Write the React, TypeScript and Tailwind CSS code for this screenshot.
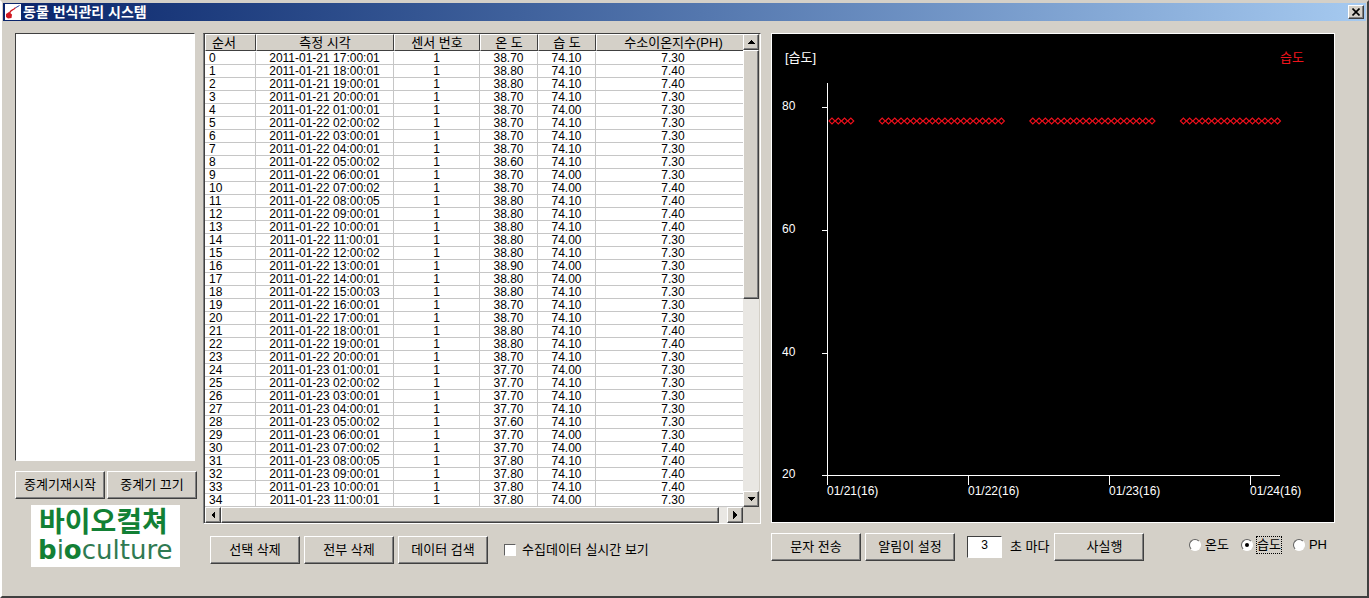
import type { ButtonHTMLAttributes, ReactNode } from "react";

const FONT = "font-['Liberation_Sans','Noto_Sans_CJK_KR',sans-serif]";
const RAISED =
  "bg-[#d4d0c8] border border-t-white border-l-white border-r-[#404040] border-b-[#404040] shadow-[inset_-1px_-1px_0_#808080]";
const TRACK = "bg-[#e9e7e3]";

type Reading = [time: string, temp: string, humidity: string, ph: string];

const firstDay: Reading[] = [
  ["17:00:01", ".70", "74.10", "7.30"],
  ["18:00:01", ".80", "74.10", "7.40"],
  ["19:00:01", ".80", "74.10", "7.40"],
  ["20:00:01", ".70", "74.10", "7.30"],
];

const fullDay: Reading[] = [
  ["01:00:01", ".70", "74.00", "7.30"],
  ["02:00:02", ".70", "74.10", "7.30"],
  ["03:00:01", ".70", "74.10", "7.30"],
  ["04:00:01", ".70", "74.10", "7.30"],
  ["05:00:02", ".60", "74.10", "7.30"],
  ["06:00:01", ".70", "74.00", "7.30"],
  ["07:00:02", ".70", "74.00", "7.40"],
  ["08:00:05", ".80", "74.10", "7.40"],
  ["09:00:01", ".80", "74.10", "7.40"],
  ["10:00:01", ".80", "74.10", "7.40"],
  ["11:00:01", ".80", "74.00", "7.30"],
  ["12:00:02", ".80", "74.10", "7.30"],
  ["13:00:01", ".90", "74.00", "7.30"],
  ["14:00:01", ".80", "74.00", "7.30"],
  ["15:00:03", ".80", "74.10", "7.30"],
  ["16:00:01", ".70", "74.10", "7.30"],
  ["17:00:01", ".70", "74.10", "7.30"],
  ["18:00:01", ".80", "74.10", "7.40"],
  ["19:00:01", ".80", "74.10", "7.40"],
  ["20:00:01", ".70", "74.10", "7.30"],
];

const onDay = (date: string, degrees: string, readings: Reading[]) =>
  readings.map(([time, temp, humidity, ph]) => [`${date} ${time}`, "1", degrees + temp, humidity, ph]);

const rows = [
  ...onDay("2011-01-21", "38", firstDay),
  ...onDay("2011-01-22", "38", fullDay),
  ...onDay("2011-01-23", "37", fullDay.slice(0, 11)),
];

const headers = ["순서", "측정 시각", "센서 번호", "온 도", "습 도", "수소이온지수(PH)"];

function PushButton({ children, className = "", ...rest }: { children: ReactNode } & ButtonHTMLAttributes<HTMLButtonElement>) {
  return (
    <button type="button" className={`h-7 w-[90px] whitespace-nowrap text-[13px] leading-4 ${RAISED} ${className}`} {...rest}>
      {children}
    </button>
  );
}

function ArrowButton({ label, points }: { label: string; points: string }) {
  return (
    <button type="button" aria-label={label} className={`flex size-4 shrink-0 items-center justify-center ${RAISED}`}>
      <svg viewBox="0 0 8 8" className="size-2" shapeRendering="crispEdges">
        <polygon points={points} />
      </svg>
    </button>
  );
}

function TitleBar() {
  return (
    <header className="flex h-[18px] items-center bg-linear-to-r from-[#0a246a] to-[#a6caf0] pr-0.5 pl-0.5">
      <svg viewBox="0 0 16 16" className="size-4 shrink-0 bg-white">
        <path d="M4.5 9.5 C5.5 5 8.5 7 10.5 3.5" fill="none" stroke="#d01820" strokeWidth="1.3" />
        <path d="M10.5 3.8 L14.5 1.5" stroke="#2b3c9c" strokeWidth="1" />
        <path d="M1 10 L4 8 L7 10.5 L6.5 14 L3 14.5 L1 13 Z" fill="#d01820" />
      </svg>
      <h1 className="ml-0.5 flex-1 whitespace-nowrap text-sm leading-[18px] font-bold text-white">동물 번식관리 시스템</h1>
      <button type="button" aria-label="닫기" className={`flex h-3.5 w-4 items-center justify-center ${RAISED}`}>
        <svg viewBox="0 0 8 8" className="size-2">
          <path d="M0.5 0.5 L7.5 7.5 M7.5 0.5 L0.5 7.5" stroke="#000" strokeWidth="1.6" />
        </svg>
      </button>
    </header>
  );
}

function Logo() {
  return (
    <svg viewBox="0 0 149 62" className="mt-1.5 ml-4 h-[62px] w-[149px] bg-white" role="img" aria-label="바이오컬쳐 bioculture">
      <text x="8" y="27" fontSize="28" fontWeight="700" fill="#128035" fontFamily="'Noto Sans CJK KR', sans-serif">
        바이오컬쳐
      </text>
      <text x="7" y="54" fontSize="26" fill="#2f7a52" fontFamily="'DejaVu Sans', sans-serif">
        <tspan fontWeight="700" fill="#128035">b</tspan>i<tspan fontWeight="700" fill="#128035">o</tspan>culture
      </text>
    </svg>
  );
}

function ReadingsTable() {
  return (
    <div className="border border-t-[#404040] border-l-[#808080] border-r-white border-b-white bg-[#d4d0c8] pr-px">
      <div className="flex border-l border-[#404040]">
        <div className="min-w-0 flex-1 overflow-hidden bg-white">
          <table className="w-[546px] table-fixed border-separate border-spacing-0 text-xs">
            <colgroup>
              <col className="w-[51px]" />
              <col className="w-[138px]" />
              <col className="w-[86px]" />
              <col className="w-[58px]" />
              <col className="w-[58px]" />
              <col />
            </colgroup>
            <thead>
              <tr>
                {headers.map((h, i) => (
                  <th key={h} scope="col" className="h-[18px] p-0 pb-px font-normal">
                    <div
                      className={`h-[17px] border border-t-white border-l-white border-r-[#404040] border-b-[#404040] bg-[#d4d0c8] text-[13px] leading-[15px] whitespace-nowrap ${i === 0 ? "pl-1.5 text-left" : "text-center"}`}
                    >
                      {h}
                    </div>
                  </th>
                ))}
              </tr>
            </thead>
            <tbody>
              {rows.map((cells, n) => (
                <tr key={cells[0]}>
                  <td className="h-[13px] border-r border-b border-[#c6c6c6] p-0 pl-1 leading-3">{n}</td>
                  {cells.map((c, i) => (
                    <td key={i} className="h-[13px] border-r border-b border-[#c6c6c6] p-0 text-center leading-3 whitespace-nowrap">
                      {c}
                    </td>
                  ))}
                </tr>
              ))}
            </tbody>
          </table>
        </div>
        <div className={`flex w-4 shrink-0 flex-col ${TRACK}`}>
          <ArrowButton label="위로" points="4,2 8,6 0,6" />
          <div className={`h-[249px] ${RAISED}`} />
          <div className="flex-1" />
          <ArrowButton label="아래로" points="0,2 8,2 4,6" />
        </div>
      </div>
      <div className="flex h-4 border-l border-[#404040] pr-4">
        <div className={`flex flex-1 ${TRACK}`}>
          <ArrowButton label="왼쪽으로" points="6,0 6,8 2,4" />
          <div className={`flex-1 ${RAISED}`} />
          <div className="w-2" />
          <ArrowButton label="오른쪽으로" points="2,0 6,4 2,8" />
        </div>
      </div>
    </div>
  );
}

/* Hours, counted from the first sample, at which a sample was taken. */
const sampleHours = [
  ...Array.from({ length: 4 }, (_, i) => i),
  ...Array.from({ length: 20 }, (_, i) => 8 + i),
  ...Array.from({ length: 20 }, (_, i) => 32 + i),
  ...Array.from({ length: 16 }, (_, i) => 56 + i),
];

const yTicks = [
  { label: "80", y: 73 },
  { label: "60", y: 196 },
  { label: "40", y: 319 },
  { label: "20", y: 441 },
];

const xTicks = [
  { label: "01/21(16)", x: 55 },
  { label: "01/22(16)", x: 196 },
  { label: "01/23(16)", x: 337 },
  { label: "01/24(16)", x: 478 },
];

function HumidityChart() {
  return (
    <div className="border border-white bg-black">
      <svg viewBox="0 0 562 488" className="block w-full" fontSize="12" fill="#fff" role="img" aria-label="습도 그래프">
        <text x="13" y="28" fontSize="13">[습도]</text>
        <text x="508" y="28" fontSize="13" fill="#f0141c">습도</text>
        <path d="M55.5 49 V451 M50 441.5 H508" stroke="#fff" fill="none" shapeRendering="crispEdges" />
        {yTicks.map((t) => (
          <g key={t.label}>
            <text x="10" y={t.y + 3}>{t.label}</text>
            <path d={`M50 ${t.y + 0.5} H55`} stroke="#fff" shapeRendering="crispEdges" />
          </g>
        ))}
        {xTicks.map((t) => (
          <g key={t.label}>
            <text x={t.x} y="461">{t.label}</text>
            <path d={`M${t.x + 0.5} 441 V451`} stroke="#fff" shapeRendering="crispEdges" />
          </g>
        ))}
        {sampleHours.map((h) => (
          <path key={h} d={`M${57 + h * 6.275} 87 l3 -3 l3 3 l-3 3 Z`} fill="none" stroke="#f0101c" strokeWidth="1.1" />
        ))}
      </svg>
    </div>
  );
}

function RadioOption({ label, focused = false }: { label: string; focused?: boolean }) {
  return (
    <label className="flex items-center gap-1 text-[13px] leading-4">
      <input
        type="radio"
        name="series"
        defaultChecked={focused}
        className="flex size-3 appearance-none items-center justify-center rounded-full border border-t-[#606060] border-l-[#606060] border-r-white border-b-white bg-white before:size-1 before:rounded-full checked:before:bg-black"
      />
      <span className={focused ? "outline outline-dotted outline-black" : ""}>{label}</span>
    </label>
  );
}

export default function App() {
  return (
    <div
      className={`flex min-h-screen flex-col border-2 border-t-[#d4d0c8] border-l-white border-r-[#404040] border-b-[#404040] bg-[#d4d0c8] p-px text-black ${FONT}`}
    >
      <TitleBar />
      <main className="flex items-start pt-3 pr-[31px] pl-3">
        <section className="w-[182px] shrink-0">
          <div
            role="listbox"
            aria-label="중계기 목록"
            className="mr-0.5 h-[428px] border border-t-[#404040] border-l-[#404040] border-r-white border-b-white bg-white"
          />
          <div className="mt-2.5 flex gap-0.5">
            <PushButton>중계기재시작</PushButton>
            <PushButton>중계기 끄기</PushButton>
          </div>
          <Logo />
        </section>

        <section className="ml-1.5 w-[558px] shrink-0">
          <ReadingsTable />
          <div className="mt-3 flex items-center pl-[7px]">
            <PushButton>선택 삭제</PushButton>
            <PushButton className="ml-1">전부 삭제</PushButton>
            <PushButton className="ml-1">데이터 검색</PushButton>
            <label className="ml-4 flex items-center gap-1.5 text-[13px] leading-4 whitespace-nowrap">
              <input
                type="checkbox"
                className="size-3 appearance-none border border-t-[#606060] border-l-[#606060] border-r-white border-b-white bg-white checked:bg-black"
              />
              수집데이터 실시간 보기
            </label>
          </div>
        </section>

        <section className="ml-2.5 min-w-0 flex-1">
          <HumidityChart />
          <div className="mt-2.5 flex items-center">
            <PushButton>문자 전송</PushButton>
            <PushButton className="ml-1">알림이 설정</PushButton>
            <label className="ml-3 flex items-center gap-2 text-[13px] leading-4 whitespace-nowrap">
              <input
                type="text"
                defaultValue="3"
                className="h-[22px] w-[35px] border border-t-[#404040] border-l-[#404040] border-r-white border-b-white bg-white pb-1 text-center text-xs"
              />
              초 마다
            </label>
            <PushButton className="ml-1 pl-3">사실행</PushButton>
            <div className="mr-2 mb-1 ml-auto flex gap-3" role="radiogroup" aria-label="그래프 항목">
              <RadioOption label="온도" />
              <RadioOption label="습도" focused />
              <RadioOption label="PH" />
            </div>
          </div>
        </section>
      </main>
    </div>
  );
}
